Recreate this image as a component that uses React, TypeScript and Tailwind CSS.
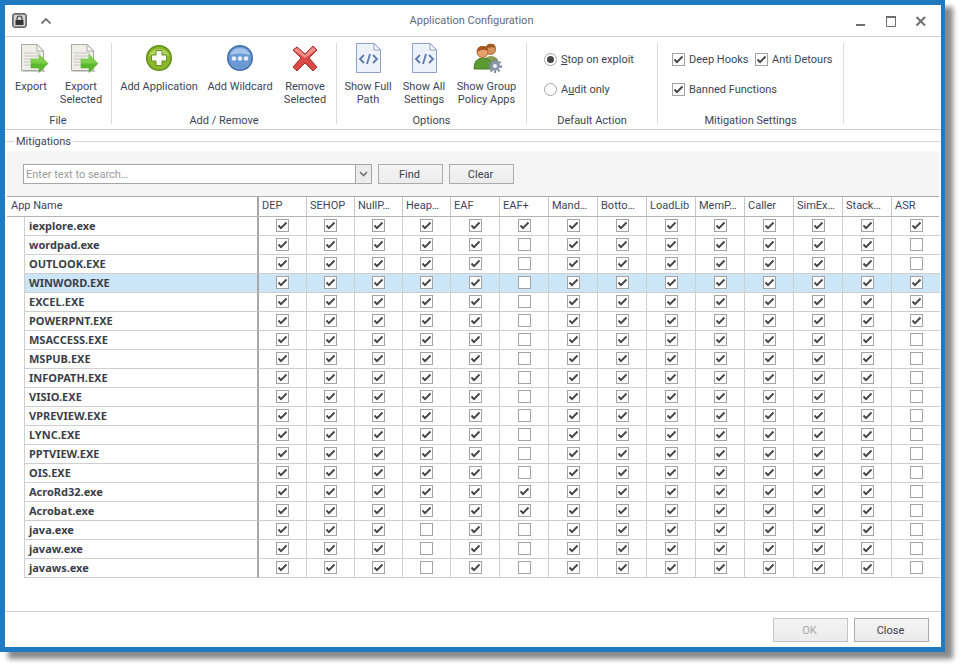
import type { ReactNode } from "react";

const COLUMNS = ["DEP", "SEHOP", "NullP…", "Heap…", "EAF", "EAF+", "Mand…", "Botto…", "LoadLib", "MemP…", "Caller", "SimEx…", "Stack…", "ASR"];

const HEAP = 3;
const EAF_PLUS = 5;
const ASR = 13;

// unchecked column indexes per app
const APPS: { name: string; off: number[]; selected?: boolean }[] = [
  { name: "iexplore.exe", off: [] },
  { name: "wordpad.exe", off: [EAF_PLUS, ASR] },
  { name: "OUTLOOK.EXE", off: [EAF_PLUS, ASR] },
  { name: "WINWORD.EXE", off: [EAF_PLUS], selected: true },
  { name: "EXCEL.EXE", off: [EAF_PLUS] },
  { name: "POWERPNT.EXE", off: [EAF_PLUS] },
  { name: "MSACCESS.EXE", off: [EAF_PLUS, ASR] },
  { name: "MSPUB.EXE", off: [EAF_PLUS, ASR] },
  { name: "INFOPATH.EXE", off: [EAF_PLUS, ASR] },
  { name: "VISIO.EXE", off: [EAF_PLUS, ASR] },
  { name: "VPREVIEW.EXE", off: [EAF_PLUS, ASR] },
  { name: "LYNC.EXE", off: [EAF_PLUS, ASR] },
  { name: "PPTVIEW.EXE", off: [EAF_PLUS, ASR] },
  { name: "OIS.EXE", off: [EAF_PLUS, ASR] },
  { name: "AcroRd32.exe", off: [ASR] },
  { name: "Acrobat.exe", off: [ASR] },
  { name: "java.exe", off: [HEAP, EAF_PLUS, ASR] },
  { name: "javaw.exe", off: [HEAP, EAF_PLUS, ASR] },
  { name: "javaws.exe", off: [HEAP, EAF_PLUS, ASR] },
];

function Check({ on }: { on: boolean }) {
  return (
    <span className="flex h-[13px] w-[13px] shrink-0 items-center justify-center border border-[#a3a3a3] bg-white">
      {on && (
        <svg width="11" height="11" viewBox="0 0 11 11">
          <path d="M1.5 5.5 L4 8.2 L9.5 2.5" fill="none" stroke="#444" strokeWidth="1.9" />
        </svg>
      )}
    </span>
  );
}

function Radio({ on }: { on: boolean }) {
  return (
    <span className="flex h-[13px] w-[13px] shrink-0 items-center justify-center rounded-full border border-[#a3a3a3] bg-white">
      {on && <span className="h-[7px] w-[7px] rounded-full bg-[#444]" />}
    </span>
  );
}

function ExportIcon() {
  return (
    <svg width="32" height="30" viewBox="0 0 32 30" className="overflow-visible">
      <path d="M6 27 L29 27 L31 29 L8 29 Z" fill="#d0d0d0" />
      <path d="M6.5 1.5 H22 L28.5 8 V27.5 H6.5 Z" fill="#efefe9" stroke="#a8a8a0" />
      <path d="M22 1.5 V8 H28.5 Z" fill="#fff" stroke="#a8a8a0" />
      <path d="M9 10 H25 M9 13 H25 M9 16 H18 M9 19 H16 M9 22 H16" stroke="#c8c8c0" strokeWidth="1" />
      <path d="M16 16 H24 V11.5 L33 20.5 L24 29.5 V25 H16 Z" fill="#5cb82c" stroke="#4c9c24" strokeWidth="0.5" />
      <path d="M16 16 H24 V11.5 L33 20.5 H16 Z" fill="#7fd048" />
    </svg>
  );
}

function AddIcon() {
  return (
    <svg width="32" height="30" viewBox="0 0 32 30">
      <circle cx="16" cy="15" r="13" fill="#5f8f14" />
      <circle cx="16" cy="15" r="11.5" fill="#8ab82a" />
      <path d="M6 13 A10.5 10 0 0 1 26 13 Q16 9 6 13 Z" fill="#b4d45e" />
      <path d="M13 7.5 H19 V12 H23.5 V18 H19 V22.5 H13 V18 H8.5 V12 H13 Z" fill="#f8faf4" stroke="#6b8f28" />
    </svg>
  );
}

function WildcardIcon() {
  return (
    <svg width="32" height="30" viewBox="0 0 32 30">
      <circle cx="16" cy="15" r="13" fill="#3f6ea8" />
      <circle cx="16" cy="15" r="11.5" fill="#6a9ad4" />
      <path d="M6 12 A10.5 10 0 0 1 26 12 Q16 9 6 12 Z" fill="#a3c4ea" />
      <circle cx="10" cy="15.5" r="2.3" fill="#e8f0fa" />
      <circle cx="16" cy="15.5" r="2.3" fill="#e8f0fa" />
      <circle cx="22" cy="15.5" r="2.3" fill="#e8f0fa" />
    </svg>
  );
}

function RemoveIcon() {
  return (
    <svg width="32" height="30" viewBox="0 0 32 30">
      <path d="M8 4 L16 11 L24 3 L28 7 L20 15 L28 24 L24 28 L16 20 L8 28 L4 24 L12 15 L4 7 Z" fill="#d84a44" stroke="#a83030" strokeLinejoin="round" />
      <path d="M8 5 L16 12 L24 4 L27 7 L16 15 L5 7 Z" fill="#f0908a" />
    </svg>
  );
}

function CodeDocIcon() {
  return (
    <svg width="32" height="30" viewBox="0 0 32 30" className="overflow-visible">
      <path d="M4.5 0.5 H22 L28.5 7 V29.5 H4.5 Z" fill="#eef2fa" stroke="#8f9fc8" />
      <path d="M22 0.5 V7 H28.5 Z" fill="#fff" stroke="#8f9fc8" />
      <path d="M12 12 L8 16 L12 20 M21 12 L25 16 L21 20 M18 11 L15 21" fill="none" stroke="#5a7ab0" strokeWidth="1.8" />
    </svg>
  );
}

function GroupIcon() {
  return (
    <svg width="32" height="30" viewBox="0 0 32 30" className="overflow-visible">
      <path d="M12 21 Q13 13 20 13 Q27 13 28 21 L26 25 H14 Z" fill="#8c9c50" />
      <circle cx="19.5" cy="6.5" r="5" fill="#d8945c" stroke="#a8602c" />
      <path d="M14.5 6 Q15 0.5 20 0.8 Q25 1 24.5 5 Q20 3 14.5 6 Z" fill="#a05a28" />
      <path d="M3 26 Q3 15 12 15 Q21 15 21 26 Z" fill="#5c9a34" stroke="#487c28" />
      <circle cx="11.5" cy="9" r="5.5" fill="#e4a06c" stroke="#b0683a" />
      <path d="M6 9 Q6 2.5 12 3 Q17.5 3 17 8 Q12 5 6 9 Z" fill="#a8541e" />
      <circle cx="24" cy="23" r="5" fill="#8a96a8" />
      <circle cx="24" cy="23" r="6" fill="none" stroke="#7c8898" strokeWidth="2" strokeDasharray="2 2" />
      <circle cx="24" cy="23" r="2" fill="#f4f6f8" />
    </svg>
  );
}

function RibbonButton({ width, icon, label }: { width: string; icon: ReactNode; label: ReactNode }) {
  return (
    <div className={`flex shrink-0 flex-col items-center text-center ${width}`}>
      <div className="flex h-[37px] w-full justify-center">{icon}</div>
      <div className="leading-[13px] whitespace-nowrap">{label}</div>
    </div>
  );
}

function RibbonGroup({ width, caption, children }: { width: string; caption: string; children: ReactNode }) {
  return (
    <div className={`flex h-[81px] shrink-0 flex-col border-r border-[#dcdcdc] ${width}`}>
      <div className="flex h-[71px] shrink-0">{children}</div>
      <div className="h-[13px] shrink-0 text-center leading-[13px]">{caption}</div>
    </div>
  );
}

function OptionRow({ control, children }: { control: ReactNode; children: ReactNode }) {
  return (
    <div className="flex h-[13px] items-center gap-[4px] whitespace-nowrap">
      {control}
      <span className="pt-[2px]">{children}</span>
    </div>
  );
}

function FlatButton({ width, disabled, children }: { width: string; disabled?: boolean; children: ReactNode }) {
  return (
    <button
      type="button"
      className={`flex items-center justify-center border bg-gradient-to-b from-[#f4f4f4] to-[#ebebeb] pt-[2px] pr-[2px] ${width} ${
        disabled ? "border-[#c4c4c4] text-[#a8a8a8]" : "border-[#ababab] text-[#3a4050]"
      }`}
    >
      {children}
    </button>
  );
}

const GRID = "grid grid-cols-[252px_repeat(4,48px)_repeat(9,49px)_48px]";

export default function App() {
  return (
    <div className="h-[667px] w-[961px] overflow-hidden bg-white font-['Roboto',sans-serif] text-[11px] text-[#3c4658]">
      <div className="flex h-[652px] w-[945px] flex-col border-t-[5px] border-r-[4px] border-b-[5px] border-l-[5px] border-[#1f7ac2] bg-white shadow-[8px_7px_5px_#8a8a8a]">
        {/* title bar */}
        <div className="flex h-[32px] shrink-0 items-center border-b border-[#d2d2d2]">
          <div className="flex w-[120px] items-center">
            <svg width="15" height="15" viewBox="0 0 15 15" className="ml-[7px]">
              <rect x="0.5" y="0.5" width="14" height="14" rx="2.5" fill="#8a8a8a" stroke="#666" />
              <rect x="2" y="2" width="11" height="11" rx="1" fill="#d4d4d4" />
              <path d="M5 7 V5.5 A2.5 2.5 0 0 1 10 5.5 V7" fill="none" stroke="#444" strokeWidth="1.2" />
              <rect x="3.5" y="7" width="8" height="5" fill="#333" />
            </svg>
            <svg width="12" height="8" viewBox="0 0 12 8" className="ml-[13px]">
              <path d="M1.5 6.5 L6 2 L10.5 6.5" fill="none" stroke="#757575" strokeWidth="1.8" />
            </svg>
          </div>
          <div className="flex-1 pt-[2px] pr-[3px] text-center text-[#5d6b7a]">Application Configuration</div>
          <div className="flex w-[120px] items-center justify-end">
            <svg width="80" height="12" viewBox="0 0 80 12" className="mr-[14px]">
              <path d="M9 10 H18" stroke="#6f6f6f" strokeWidth="2" />
              <path d="M39.5 2 H48.5 V11.5 H39.5 Z" fill="none" stroke="#6f6f6f" />
              <path d="M39 2 H49" stroke="#6f6f6f" strokeWidth="2" />
              <path d="M69.5 2 L78 10.5 M78 2 L69.5 10.5" stroke="#6f6f6f" strokeWidth="2" />
            </svg>
          </div>
        </div>

        {/* ribbon */}
        <div className="flex h-[93px] shrink-0 border-b border-[#d2d2d2] pt-[6px]">
          <RibbonGroup width="w-[107px]" caption="File">
            <RibbonButton width="w-[50px] ml-[1px]" icon={<ExportIcon />} label="Export" />
            <RibbonButton width="w-[50px]" icon={<ExportIcon />} label={<>Export<br />Selected</>} />
          </RibbonGroup>
          <RibbonGroup width="w-[225px]" caption="Add / Remove">
            <RibbonButton width="w-[80px] ml-[7px]" icon={<AddIcon />} label="Add Application" />
            <RibbonButton width="w-[82px]" icon={<WildcardIcon />} label="Add Wildcard" />
            <RibbonButton width="w-[48px]" icon={<RemoveIcon />} label={<>Remove<br />Selected</>} />
          </RibbonGroup>
          <RibbonGroup width="w-[190px]" caption="Options">
            <RibbonButton width="w-[56px] ml-[3px]" icon={<CodeDocIcon />} label={<>Show Full<br />Path</>} />
            <RibbonButton width="w-[56px]" icon={<CodeDocIcon />} label={<>Show All<br />Settings</>} />
            <RibbonButton width="w-[69px]" icon={<GroupIcon />} label={<>Show Group<br />Policy Apps</>} />
          </RibbonGroup>
          <RibbonGroup width="w-[131px]" caption="Default Action">
            <div className="flex flex-col gap-[17px] pl-[17px] pt-[10px]">
              <OptionRow control={<Radio on />}><u>S</u>top on exploit</OptionRow>
              <OptionRow control={<Radio on={false} />}>A<u>u</u>dit only</OptionRow>
            </div>
          </RibbonGroup>
          <RibbonGroup width="w-[186px]" caption="Mitigation Settings">
            <div className="flex flex-col gap-[17px] pl-[14px] pt-[10px]">
              <div className="flex">
                <div className="w-[83px]">
                  <OptionRow control={<Check on />}>Deep Hooks</OptionRow>
                </div>
                <OptionRow control={<Check on />}>Anti Detours</OptionRow>
              </div>
              <OptionRow control={<Check on />}>Banned Functions</OptionRow>
            </div>
          </RibbonGroup>
        </div>

        {/* mitigations group box */}
        <div className="flex h-[21px] shrink-0 items-center pt-[2px]">
          <div className="h-px w-[9px] bg-[#d8d8d8]" />
          <div className="px-[2px] pt-[2px]">Mitigations</div>
          <div className="h-px flex-1 bg-[#d8d8d8]" />
        </div>

        <div className="flex min-h-0 flex-1 flex-col px-[2px]">
          <div className="flex h-[45px] shrink-0 gap-[6px] bg-[#f5f5f5] pl-[16px] pt-[13px]">
            <div className="flex h-[20px] w-[349px]">
              <div className="flex flex-1 items-center border border-[#a6a6a6] bg-white pl-[2px] pt-[2px] text-[#9a9a9a]">Enter text to search…</div>
              <div className="flex w-[16px] items-center justify-center border border-l-0 border-[#a6a6a6] bg-[#ececec]">
                <svg width="9" height="6" viewBox="0 0 9 6">
                  <path d="M1 1 L4.5 4.5 L8 1" fill="none" stroke="#707070" strokeWidth="1.6" />
                </svg>
              </div>
            </div>
            <FlatButton width="h-[20px] w-[65px]">Find</FlatButton>
            <FlatButton width="h-[20px] w-[65px]">Clear</FlatButton>
          </div>

          {/* table */}
          <div className={`${GRID} h-[21px] shrink-0 border-y border-t-[#ababab] border-b-[#b4b4b4] bg-white`}>
            <div className="border-r-2 border-[#a8a8a8] pl-[4px] leading-[18px]">App Name</div>
            {COLUMNS.map((col, i) => (
              <div key={col} className={`pl-[3px] leading-[18px] whitespace-nowrap ${i < 13 ? "border-r border-[#c8c8c8]" : ""}`}>
                {col}
              </div>
            ))}
          </div>
          {APPS.map((app) => (
            <div key={app.name} className={`${GRID} h-[19px] shrink-0`}>
              <div className="flex">
                <div className="w-[17px] shrink-0" />
                <div className={`flex-1 border-r-2 border-b border-l border-r-[#a8a8a8] border-b-[#cfcfcf] border-l-[#cfcfcf] pl-[4px] font-['Noto_Sans',sans-serif] font-bold leading-[18px] text-[#3a3f4a] ${app.selected ? "bg-[#cde6f7]" : ""}`}>
                  {app.name}
                </div>
              </div>
              {COLUMNS.map((col, i) => (
                <div
                  key={col}
                  className={`flex items-center justify-center border-b border-[#cfcfcf] pb-px ${i < 13 ? "border-r" : ""} ${app.selected ? "bg-[#cde6f7]" : ""}`}
                >
                  <Check on={!app.off.includes(i)} />
                </div>
              ))}
            </div>
          ))}
        </div>

        {/* footer */}
        <div className="flex h-[36px] shrink-0 justify-end gap-[6px] border-t border-[#d2d2d2] pr-[12px] pt-[6px]">
          <FlatButton width="h-[24px] w-[75px]" disabled>OK</FlatButton>
          <FlatButton width="h-[24px] w-[75px]">Close</FlatButton>
        </div>
      </div>
    </div>
  );
}
